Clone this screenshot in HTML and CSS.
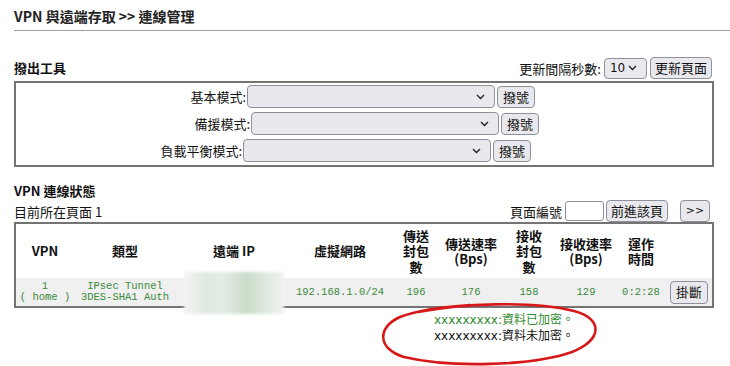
FILE: index.html
```html
<!DOCTYPE html>
<html lang="zh-Hant">
<head>
    <meta charset="UTF-8">
    <meta name="viewport" content="width=device-width, initial-scale=1.0">
    <title>連線管理</title>
    <link rel="stylesheet" href="styles.css">
</head>
<body>
    <h1 class="page-title">VPN 與遠端存取 &gt;&gt; 連線管理</h1>

    <div class="tool-head">
        <h2 class="section-title">撥出工具</h2>
        <div class="refresh">
            <span>更新間隔秒數:</span>
            <select class="ctl sel-small"><option>10</option></select>
            <button class="btn">更新頁面</button>
        </div>
    </div>

    <div class="dial-box">
        <div class="dial-row">
            <label>基本模式:</label>
            <select class="ctl sel-wide"></select>
            <button class="btn">撥號</button>
        </div>
        <div class="dial-row shift-r">
            <label>備援模式:</label>
            <select class="ctl sel-wide"></select>
            <button class="btn">撥號</button>
        </div>
        <div class="dial-row shift-l">
            <label>負載平衡模式:</label>
            <select class="ctl sel-wide"></select>
            <button class="btn">撥號</button>
        </div>
    </div>

    <h2 class="section-title status-title">VPN 連線狀態</h2>
    <div class="page-bar">
        <span>目前所在頁面 1</span>
        <div class="pager">
            <span>頁面編號</span>
            <input class="page-input" type="text">
            <button class="btn">前進該頁</button>
            <button class="btn btn-next">&gt;&gt;</button>
        </div>
    </div>

    <div class="vpn-table">
        <div class="t-row t-head">
            <div class="cell"><span>VPN</span></div>
            <div class="cell"><span>類型</span></div>
            <div class="cell"><span>遠端 IP</span></div>
            <div class="cell"><span>虛擬網路</span></div>
            <div class="cell"><div class="stack"><span>傳送</span><span>封包</span><span>數</span></div></div>
            <div class="cell"><div class="stack"><span>傳送速率</span><span>(Bps)</span></div></div>
            <div class="cell"><div class="stack"><span>接收</span><span>封包</span><span>數</span></div></div>
            <div class="cell"><div class="stack"><span>接收速率</span><span>(Bps)</span></div></div>
            <div class="cell"><div class="stack"><span>運作</span><span>時間</span></div></div>
            <div class="cell"></div>
        </div>
        <div class="t-row t-data">
            <div class="cell"><div class="stack"><span>1</span><span>( home )</span></div></div>
            <div class="cell"><div class="stack"><span>IPsec Tunnel</span><span>3DES-SHA1 Auth</span></div></div>
            <div class="cell"><div class="ip-blur"></div></div>
            <div class="cell"><span>192.168.1.0/24</span></div>
            <div class="cell"><span>196</span></div>
            <div class="cell"><span>176</span></div>
            <div class="cell"><span>158</span></div>
            <div class="cell"><span>129</span></div>
            <div class="cell"><span>0:2:28</span></div>
            <div class="cell c-act"><button class="btn">掛斷</button></div>
        </div>
    </div>

    <div class="legend">
        <div class="enc">xxxxxxxxx:資料已加密。</div>
        <div>xxxxxxxxx:資料未加密。</div>
    </div>

    <svg class="circle-mark" width="730" height="366" viewBox="0 0 730 366">
        <path d="M 418 312 C 460 304, 530 300, 574 311 C 604 319, 602 340, 572 352 C 532 366, 450 368, 404 357 C 377 349, 377 327, 400 317 C 418 310, 440 307, 470 305"
              fill="none" stroke="#d81818" stroke-width="2.6" stroke-linecap="round"/>
    </svg>
</body>
</html>
```

FILE: styles.css
```css
html {
    overflow: hidden;
}
body {
    position: relative;
    margin: 0;
    padding: 0 16px 0 14px;
    min-height: 366px;
    font-family: "Noto Sans CJK TC", "DejaVu Sans", sans-serif;
    font-size: 13px;
    color: #111;
    background-color: #fff;
}
.page-title {
    margin: 0 -16px 0 0;
    padding: 6px 0 4px 0;
    line-height: 20px;
    font-size: 14px;
    font-weight: bold;
    color: #222;
    border-bottom: 1px solid #a0a0a0;
}
.section-title {
    margin: 0;
    font-size: 13px;
    font-weight: bold;
    line-height: 18px;
}
.tool-head {
    display: flex;
    justify-content: space-between;
    align-items: center;
    margin-top: 26px;
    height: 22px;
    padding-right: 2px;
}
.refresh {
    display: flex;
    align-items: center;
    gap: 3px;
}
.ctl {
    appearance: none;
    height: 21px;
    background-color: #e9e9ed;
    border: 1px solid #8f8f9d;
    border-radius: 4px;
    font-family: "DejaVu Sans", sans-serif;
    font-size: 12px;
    color: #111;
    background-image: url("data:image/svg+xml,%3Csvg xmlns='http://www.w3.org/2000/svg' width='9' height='6'%3E%3Cpath d='M1 1l3.5 3.5L8 1' fill='none' stroke='%23222' stroke-width='1.4'/%3E%3C/svg%3E");
    background-repeat: no-repeat;
    background-position: right 9px center;
}
.sel-small {
    width: 43px;
    padding: 0 0 0 5px;
}
.sel-wide {
    width: 248px;
    height: 23px;
}
.btn {
    height: 22px;
    padding: 0 4px;
    background-color: #e9e9ed;
    border: 1px solid #8f8f9d;
    border-radius: 4px;
    font-family: "Noto Sans CJK TC", sans-serif;
    font-size: 13px;
    line-height: 18px;
    color: #111;
}
.dial-box {
    margin-top: 2px;
    height: 82px;
    border: 2px solid #747474;
}
.dial-row {
    display: grid;
    grid-template-columns: 231px 250px 40px 1fr;
    align-items: center;
    height: 27px;
}
.dial-row label {
    text-align: right;
    padding-right: 1px;
}
.dial-row .btn {
    justify-self: start;
    width: 38px;
}
.shift-r {
    grid-template-columns: 235px 250px 40px 1fr;
}
.shift-l {
    grid-template-columns: 227px 250px 40px 1fr;
}
.status-title {
    margin-top: 15px;
}
.page-bar {
    display: flex;
    justify-content: space-between;
    align-items: center;
    height: 22px;
    padding-right: 4px;
}
.pager {
    display: flex;
    align-items: center;
    gap: 2px;
}
.page-input {
    width: 39px;
    height: 20px;
    box-sizing: border-box;
    border: 1px solid #8f8f9d;
    border-radius: 3px;
    margin-left: 1px;
}
.btn-next {
    width: 30px;
    margin-left: 10px;
    font-family: "DejaVu Sans", sans-serif;
    font-size: 11px;
}
.vpn-table {
    border: 2px solid #747474;
}
.t-row {
    display: grid;
    grid-template-columns: 58px 102px 116px 96px 56px 54px 62px 52px 58px 42px;
}
.t-head {
    height: 54px;
    font-weight: bold;
    font-size: 13px;
    line-height: 15.5px;
}
.t-data {
    height: 28px;
    background-color: #f0f0f0;
    font-family: "Liberation Mono", "DejaVu Sans Mono", monospace;
    font-size: 10.5px;
    line-height: 11px;
    color: #3a8a3a;
}
.cell {
    display: flex;
    justify-content: center;
    align-items: center;
    min-width: 0;
    white-space: nowrap;
    text-align: center;
}
.stack span {
    display: block;
}
.c-act {
    justify-content: flex-start;
}
.t-data .btn {
    height: 23px;
    padding: 0 5px;
}
.ip-blur {
    width: 100px;
    height: 42px;
    margin-top: -6px;
    margin-bottom: -8px;
    background: linear-gradient(90deg, #f3f5f3 0%, #dfe9df 22%, #e4ece4 40%, #c9dcc9 62%, #d9e6d9 78%, #f0f3f0 100%);
    filter: blur(1.5px);
}
.legend {
    padding: 4px 0 0 420px;
    font-family: "DejaVu Sans", "Noto Sans CJK TC", sans-serif;
    font-size: 12px;
    line-height: 16px;
    color: #111;
}
.legend .enc {
    color: #2f8a2f;
}
.circle-mark {
    position: absolute;
    top: 0;
    left: 0;
    pointer-events: none;
}
```
